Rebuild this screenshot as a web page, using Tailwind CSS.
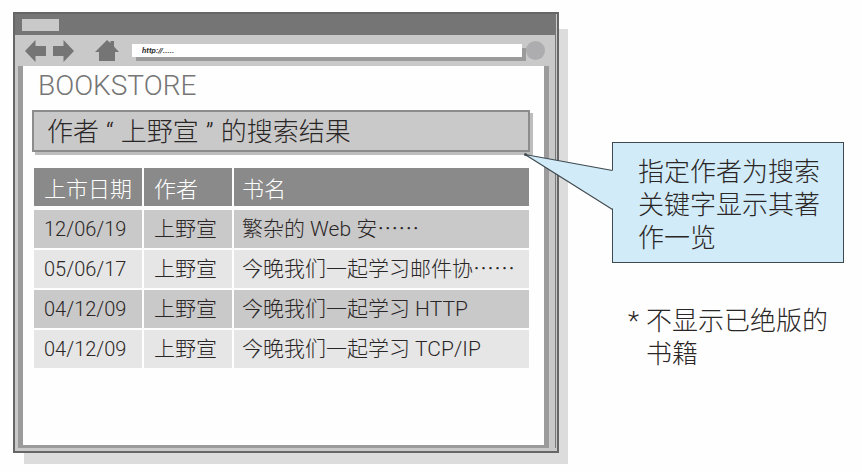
<!DOCTYPE html>
<html lang="zh-CN">
<head>
<meta charset="utf-8">
<meta name="viewport" content="width=device-width, initial-scale=1">
<title>BOOKSTORE</title>
<script src="https://cdn.jsdelivr.net/npm/@tailwindcss/browser@4"></script>
</head>
<body class="bg-[#fefefe] font-[Roboto,'Noto_Sans_CJK_SC',sans-serif] font-light text-[#2b2626]">
<main class="flex items-start gap-[53px] pt-3 pr-[18px] pb-5 pl-[13px]">

  <!-- Browser window -->
  <section class="relative isolate min-w-0 flex-1">
    <div class="absolute -right-[9px] -bottom-[11px] left-[11px] top-[17px] -z-10 bg-[#dcdcdc]"></div>
    <div class="border-2 border-[#666] bg-[#c9c9c9]">
     <div class="border-r border-[#c9c9c9]"><div class="border-r border-[#777]">
      <div class="flex h-[21px] items-center bg-[#757575] pl-[7px]">
        <div class="h-3 w-[37px] bg-[#c9c9c9]"></div>
      </div>
      <nav class="flex h-[31px] items-center pr-[10px] pl-[10px]">
        <button type="button" aria-label="后退" class="text-[#757575]">
          <svg width="21" height="22" viewBox="0 0 21 22" fill="currentColor"><path d="M0 11 10.500 0V6H21V16H10.500V22Z"/></svg>
        </button>
        <button type="button" aria-label="前进" class="ml-[7px] text-[#757575]">
          <svg width="21" height="22" viewBox="0 0 21 22" fill="currentColor"><path d="M21 11 10.500 0V6H0V16H10.500V22Z"/></svg>
        </button>
        <button type="button" aria-label="主页" class="ml-[21px] text-[#757575]">
          <svg width="24" height="21" viewBox="0 0 24 21" fill="currentColor"><path d="M12 0 15.500 3V1H19V6.500L24 12H20V21H4V12H0Z"/></svg>
        </button>
        <input type="text" aria-label="地址" value="http://....." class="ml-[13px] h-[13px] min-w-0 flex-1 bg-white px-[10px] text-[8px] font-bold italic text-[#333] shadow-[4px_4px_0_#9b9b9b] outline-none">
        <button type="button" aria-label="刷新" class="relative ml-1 size-[19px] shrink-0 rounded-full bg-[#adadb0]"></button>
      </nav>
      <div class="mr-[6px] mb-[3px] ml-[3px] border-x-[5px] border-b-[3px] border-[#9b9b9b] bg-[#fefefe] pr-[10px] pb-[77px] pl-[9px]">
        <h1 class="pt-1 pl-[6px] text-[28px] leading-8 text-[#757575]">BOOKSTORE</h1>
        <h2 class="mt-2 mr-1 border-2 border-[#8c8c8c] bg-[#c9c9c9] pt-[3px] pl-[13px] text-[26px] leading-[35px] shadow-[3px_3px_0_#bdbdbd]">作者<span class="mx-[7px]">“</span>上野宣<span class="mx-[7px]">”</span>的搜索结果</h2>
        <div class="pt-4 pr-[5px] pl-[2px]">
          <table class="w-full table-fixed border-collapse text-left text-[21px] leading-[38px]">
            <colgroup><col class="w-[109px]"><col class="w-[90px]"><col></colgroup>
            <thead>
              <tr class="border-b-4 border-[#fefefe] bg-[#8a8a8a] text-[22px] text-white">
                <th scope="col" class="border-r-2 border-[#fefefe] pt-[6px] pl-[10px] leading-8 font-light">上市日期</th>
                <th scope="col" class="border-r-2 border-[#fefefe] pt-[6px] pl-[10px] leading-8 font-light">作者</th>
                <th scope="col" class="pt-[6px] pl-2 leading-8 font-light">书名</th>
              </tr>
            </thead>
            <tbody>
              <tr class="border-b-2 border-[#fefefe] bg-[#c9c9c9]"><td class="border-r-2 border-[#fefefe] pl-[10px] text-[20px]">12/06/19</td><td class="border-r-2 border-[#fefefe] pl-[10px]">上野宣</td><td class="pl-2">繁杂的 Web 安<span class="font-['Noto_Sans_CJK_SC',sans-serif] leading-none">……</span></td></tr>
              <tr class="border-b-2 border-[#fefefe] bg-[#e6e6e6]"><td class="border-r-2 border-[#fefefe] pl-[10px] text-[20px]">05/06/17</td><td class="border-r-2 border-[#fefefe] pl-[10px]">上野宣</td><td class="pl-2">今晚我们一起学习邮件协<span class="font-['Noto_Sans_CJK_SC',sans-serif] leading-none">……</span></td></tr>
              <tr class="border-b-2 border-[#fefefe] bg-[#c9c9c9]"><td class="border-r-2 border-[#fefefe] pl-[10px] text-[20px]">04/12/09</td><td class="border-r-2 border-[#fefefe] pl-[10px]">上野宣</td><td class="pl-2">今晚我们一起学习 HTTP</td></tr>
              <tr class="bg-[#e6e6e6]"><td class="border-r-2 border-[#fefefe] pl-[10px] text-[20px]">04/12/09</td><td class="border-r-2 border-[#fefefe] pl-[10px]">上野宣</td><td class="pl-2">今晚我们一起学习 TCP/IP</td></tr>
            </tbody>
          </table>
        </div>
      </div>
     </div></div>
    </div>
  </section>

  <!-- Callout and footnote -->
  <aside class="mt-[130px] w-[232px] shrink-0 text-[26px] leading-[33px]">
    <div class="relative border border-[#3f4a50] bg-[#d1ebf8] pt-[13px] pr-4 pb-[7px] pl-[25px]">
      <svg class="absolute top-[10px] -left-[89px]" width="90" height="58" viewBox="0 0 90 58" aria-hidden="true">
        <path d="M90 17.500 1 1.500 90 56.500Z" fill="#d1ebf8"/>
        <path d="M88.500 17.500 1 1.500 88.500 56.500" fill="none" stroke="#3f4a50" stroke-width="1.200"/>
        <circle cx="1.500" cy="1.500" r="1.500" fill="#3f4a50"/>
      </svg>
      <p>指定作者为搜索关键字显示其著作一览</p>
    </div>
    <p class="mt-[42px] flex pl-4"><span class="w-[18px] shrink-0">*</span><span>不显示已绝版的书籍</span></p>
  </aside>
</main>
</body>
</html>
